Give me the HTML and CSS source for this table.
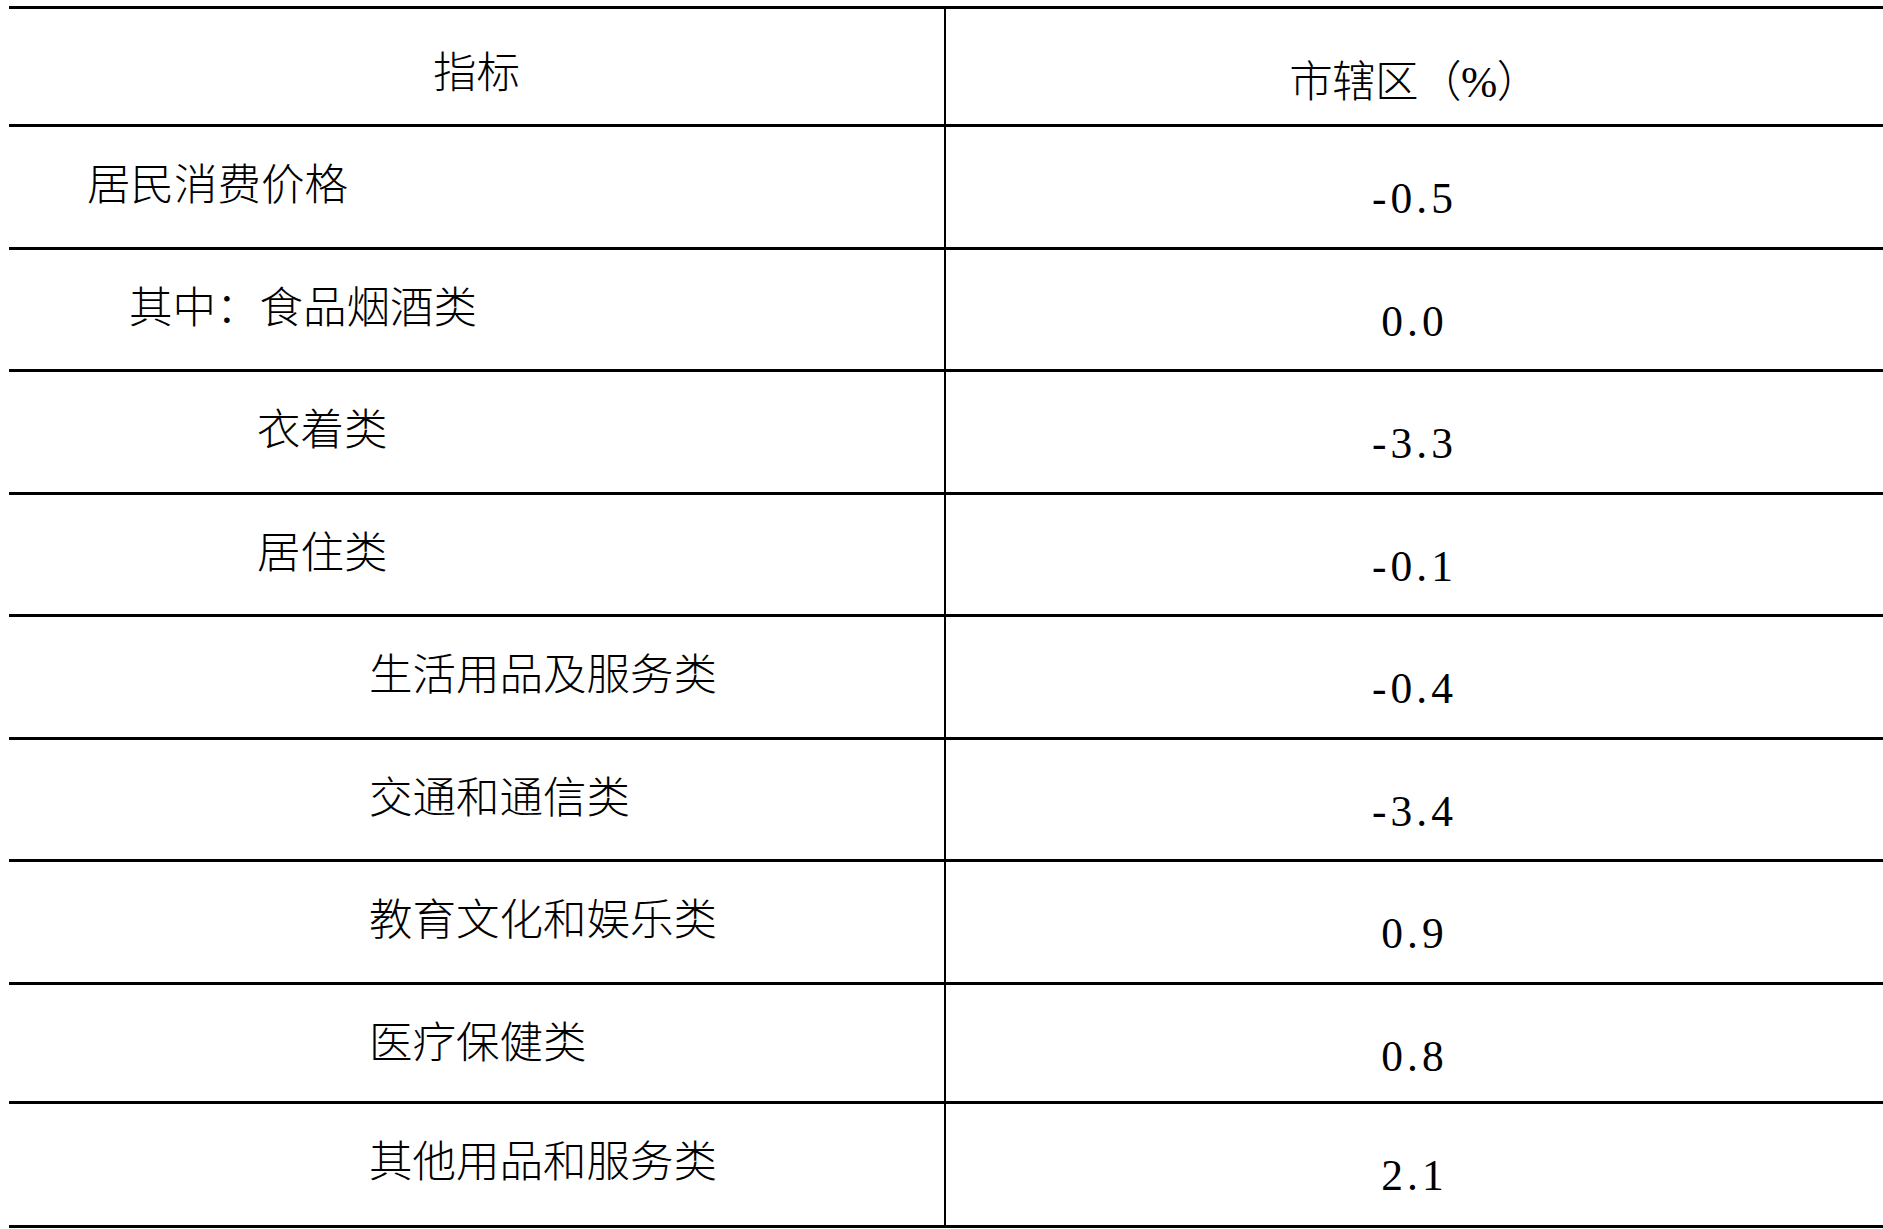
FILE: index.html
```html
<!DOCTYPE html>
<html lang="zh-CN">
<head>
<meta charset="utf-8">
<title>居民消费价格</title>
<link rel="stylesheet" href="styles.css">
</head>
<body>
<div class="table">
  <div class="row head">
    <div class="cell label center">指标</div>
    <div class="cell value">市辖区（%）</div>
  </div>
  <div class="row">
    <div class="cell label l0">居民消费价格</div>
    <div class="cell value num">-0.5</div>
  </div>
  <div class="row">
    <div class="cell label l1">其中：食品烟酒类</div>
    <div class="cell value num">0.0</div>
  </div>
  <div class="row">
    <div class="cell label l2">衣着类</div>
    <div class="cell value num">-3.3</div>
  </div>
  <div class="row">
    <div class="cell label l2">居住类</div>
    <div class="cell value num">-0.1</div>
  </div>
  <div class="row">
    <div class="cell label l3">生活用品及服务类</div>
    <div class="cell value num">-0.4</div>
  </div>
  <div class="row">
    <div class="cell label l3">交通和通信类</div>
    <div class="cell value num">-3.4</div>
  </div>
  <div class="row">
    <div class="cell label l3">教育文化和娱乐类</div>
    <div class="cell value num">0.9</div>
  </div>
  <div class="row short">
    <div class="cell label l3">医疗保健类</div>
    <div class="cell value num">0.8</div>
  </div>
  <div class="row tall">
    <div class="cell label l3">其他用品和服务类</div>
    <div class="cell value num">2.1</div>
  </div>
</div>
</body>
</html>
```
FILE: styles.css
```css
html, body {
  margin: 0;
  padding: 0;
  background: #ffffff;
  overflow: hidden;
}

body {
  font-family: "Liberation Serif", "Noto Sans CJK SC", serif;
  color: #000000;
}

.table {
  margin: 6px 0 0 9px;
  width: 1874px;
  border-top: 3px solid #000000;
}

.row {
  display: grid;
  grid-template-columns: 935px 1fr;
  box-sizing: border-box;
  height: 122.5px;
  border-bottom: 3px solid #000000;
}

.row.head {
  height: 118px;
}

.row.short {
  height: 119px;
}

.row.tall {
  height: 124px;
}

.cell {
  font-size: 43.5px;
  line-height: 50px;
  white-space: nowrap;
  font-weight: 300;
}

.label {
  padding-top: 33px;
}

.value {
  border-left: 2px solid #000000;
  text-align: center;
}

.head .label {
  padding-top: 39px;
}

.head .value {
  padding-top: 48px;
  letter-spacing: -0.5px;
}

.num {
  padding-top: 46px;
  letter-spacing: 4px;
  font-weight: 400;
}

.center {
  text-align: center;
}

.l0 { padding-left: 78px; }
.l1 { padding-left: 120px; }
.l2 { padding-left: 248px; }
.l3 { padding-left: 360px; }
```
